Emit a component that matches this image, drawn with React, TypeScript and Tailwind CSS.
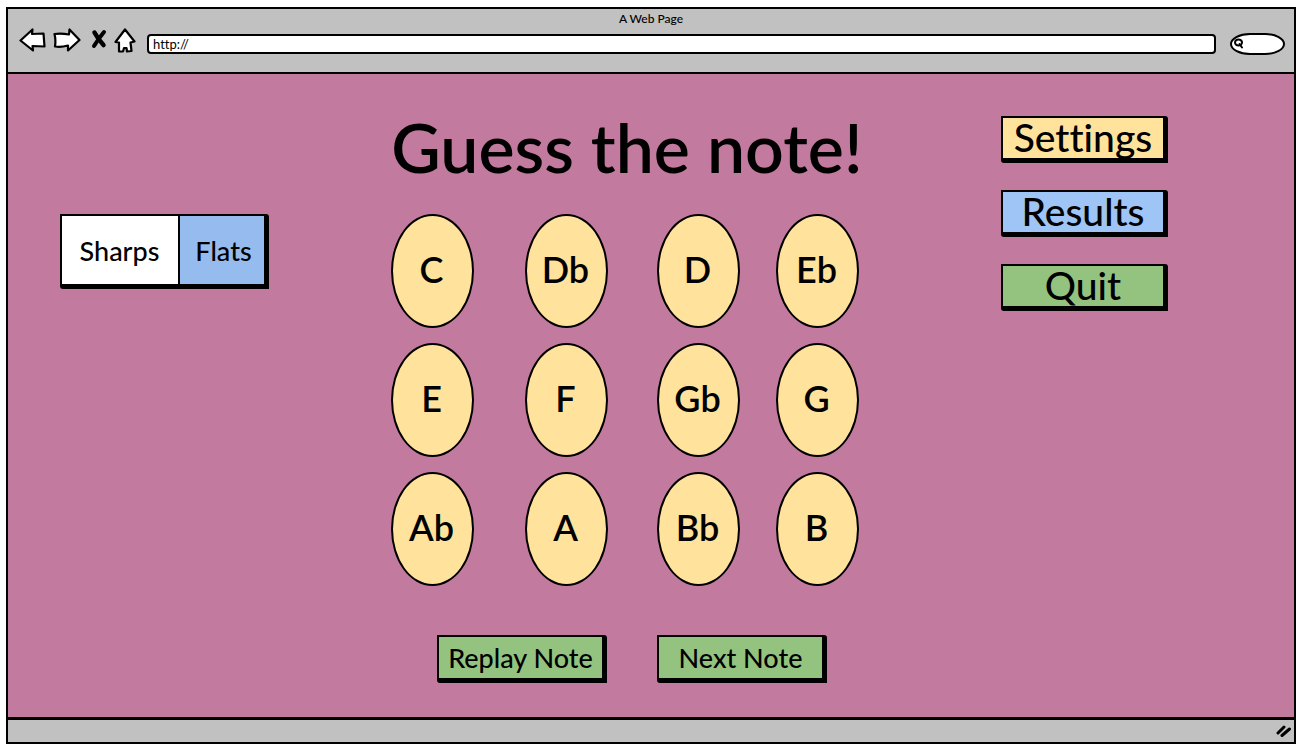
import { useState } from "react";

const notes = ["C", "Db", "D", "Eb", "E", "F", "Gb", "G", "Ab", "A", "Bb", "B"];

const raised =
  "flex items-center justify-center whitespace-nowrap rounded-tr-[3px] rounded-bl-[3px] border-2 border-r-[5px] border-b-[5px] border-black";

const menu = [
  { label: "Settings", tone: "bg-[#ffe29b]" },
  { label: "Results", tone: "bg-[#9fc5f6]" },
  { label: "Quit", tone: "bg-[#94c380]" },
];

function Outline({ d, width, label }: { d: string; width: number; label: string }) {
  return (
    <button type="button" aria-label={label}>
      <svg
        width={width}
        height="26"
        viewBox={`0 0 ${width} 26`}
        fill="white"
        stroke="black"
        strokeWidth="2.2"
        strokeLinejoin="round"
        strokeLinecap="round"
      >
        <path d={d} />
      </svg>
    </button>
  );
}

function Toolbar() {
  return (
    <header className="flex h-[65px] flex-col border-b-2 border-black bg-[#c1c1c1]">
      <p className="pt-[2px] text-center text-[12px] leading-4 font-medium">A Web Page</p>
      <div className="flex items-center pr-[9px] pl-[11px]">
        <Outline
          label="Back"
          width={27}
          d="M1.5 12.5 L13.5 1.5 L13 6 L24.5 5.5 L25.5 18.5 L13.5 18 L14 22.5 Z"
        />
        <span className="w-[7px]" />
        <Outline
          label="Forward"
          width={28}
          d="M26.5 12 L16.5 1.5 L16 6.5 Q8 5 1.5 6 Q3 12 2 18.5 Q8 19.5 15 17.5 L15 22.5 Z"
        />
        <span className="w-[9px]" />
        <button type="button" aria-label="Stop">
          <svg
            width="18"
            height="26"
            viewBox="0 0 18 26"
            fill="none"
            stroke="black"
            strokeLinecap="round"
            strokeLinejoin="round"
          >
            <path strokeWidth="4.500" d="M4.500 4.500 Q8 11 13.500 17" />
            <path strokeWidth="4" d="M14 4 Q9 10 4 18" />
          </svg>
        </button>
        <span className="w-[6px]" />
        <Outline
          label="Home"
          width={22}
          d="M11 1.500 L20.500 13.500 L16.500 14.500 L17.500 23 L13 23.500 L12.500 20 L10 20 L9 23.500 L5 23.500 L5 14.500 L1.500 14 Z"
        />
        <div className="ml-[11px] flex-1 pt-[6px]">
          <input
            type="text"
            aria-label="Address"
            defaultValue="http://"
            className="block h-[20px] w-full rounded-[4px] border-2 border-black bg-white px-1 py-0 text-[13px] leading-4 outline-none"
          />
        </div>
        <div className="relative ml-[14px] w-[55px] pt-[6px]">
          <input
            type="text"
            aria-label="Search"
            className="block h-[22px] w-full rounded-[20px/11px] border-2 border-black bg-white py-0 pl-4 text-[11px] leading-4 outline-none"
          />
          <svg
            className="pointer-events-none absolute top-[11px] left-[4px]"
            width="11"
            height="12"
            viewBox="0 0 11 12"
            fill="none"
            stroke="black"
            strokeWidth="2"
            strokeLinecap="round"
          >
            <ellipse cx="4.500" cy="4.500" rx="3.500" ry="3" />
            <path d="M5.500 6 L8 9.500" />
          </svg>
        </div>
      </div>
    </header>
  );
}

export default function App() {
  const [accidental, setAccidental] = useState("Sharps");

  return (
    <div className="flex min-h-screen bg-white pt-[7px] pr-[2px] pb-[6px] pl-[6px] font-['Lato','Open_Sans',sans-serif] text-black [font-variant-ligatures:none]">
      <div className="flex flex-1 flex-col border-2 border-black">
        <Toolbar />

        <main className="grid flex-1 grid-cols-[383fr_468px_435fr] bg-[#c27b9f]">
          <div className="flex items-start justify-center pt-[140px] pr-[71px]">
            <div className={`${raised} h-[75px] items-stretch bg-black`} role="group" aria-label="Accidentals">
              <button
                type="button"
                aria-pressed={accidental === "Sharps"}
                onClick={() => setAccidental("Sharps")}
                className="w-[118px] border-r-2 border-black bg-white pt-0.5 text-[27px] font-medium"
              >
                Sharps
              </button>
              <button
                type="button"
                aria-pressed={accidental === "Flats"}
                onClick={() => setAccidental("Flats")}
                className="w-[84px] bg-[#96bbee] pt-0.5 pl-1 text-[27px] font-medium"
              >
                Flats
              </button>
            </div>
          </div>

          <div className="flex flex-col items-center pt-[33px]">
            <h1 className="pl-1 text-center text-[68px] leading-[80px] font-semibold whitespace-nowrap">
              Guess the note!
            </h1>
            <div className="mt-[27px] grid grid-cols-[134px_132px_119px_83px] gap-y-[15px]">
              {notes.map((note) => (
                <button
                  key={note}
                  type="button"
                  className="flex h-[114px] w-[83px] items-center justify-center rounded-[50%] border-2 border-black bg-[#ffe29b] pr-0.5 pb-1 text-[36px] leading-none font-semibold"
                >
                  {note}
                </button>
              ))}
            </div>
            <div className="mt-[49px] flex gap-[50px] pl-[14px]">
              {["Replay Note", "Next Note"].map((label) => (
                <button
                  key={label}
                  type="button"
                  className={`${raised} h-[48px] w-[170px] bg-[#94c380] text-[27px] leading-none font-medium`}
                >
                  {label}
                </button>
              ))}
            </div>
          </div>

          <nav aria-label="Game menu" className="flex flex-col items-center gap-[27px] pt-[42px] pl-4">
            {menu.map(({ label, tone }) => (
              <button
                key={label}
                type="button"
                className={`${raised} ${tone} h-[47px] w-[167px] pb-0.5 text-[39px] leading-none font-medium`}
              >
                {label}
              </button>
            ))}
          </nav>
        </main>

        <footer className="flex h-[25px] items-center justify-end border-t-3 border-black bg-[#c1c1c1] pr-[2px]">
          <svg
            width="16"
            height="14"
            viewBox="0 0 16 14"
            stroke="black"
            strokeWidth="3"
            strokeLinecap="round"
            aria-hidden="true"
          >
            <path d="M2 9 L8 3 M6 11.500 L13.500 5" />
          </svg>
        </footer>
      </div>
    </div>
  );
}
